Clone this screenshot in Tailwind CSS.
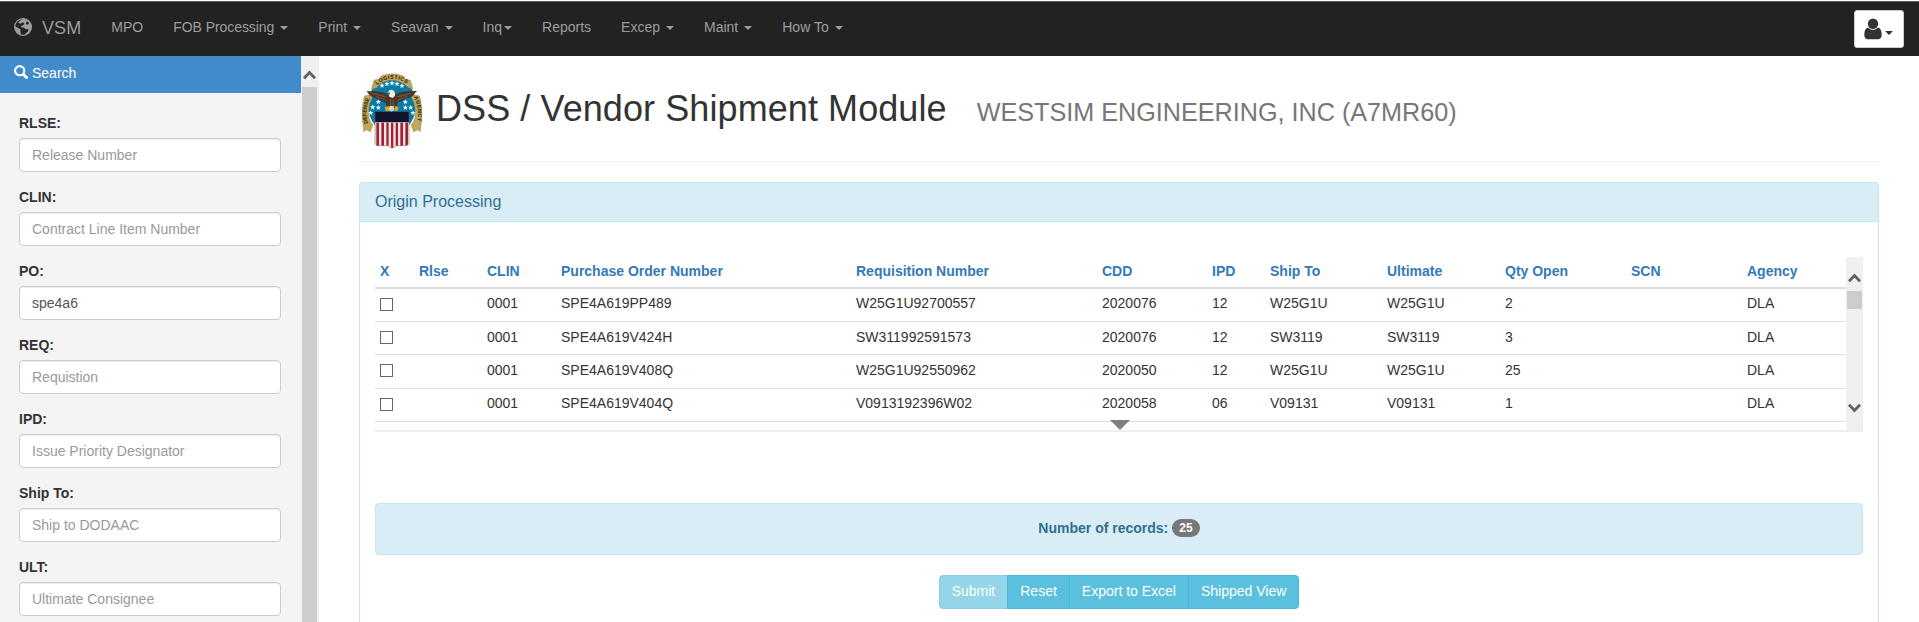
<!DOCTYPE html>
<html lang="en">
<head>
<meta charset="utf-8">
<title>DSS / Vendor Shipment Module</title>
<script src="https://cdn.jsdelivr.net/npm/@tailwindcss/browser@4"></script>
</head>
<body class="h-[622px] overflow-hidden bg-white font-['Liberation_Sans',Arial,sans-serif] text-sm leading-5 text-[#333]">
<div class="flex h-[622px] flex-col pt-px">
  <!-- Navigation bar -->
  <nav class="flex h-[55px] shrink-0 items-start border-t border-[#5c5c5c] bg-[#222] pr-[15px] text-[#9d9d9d]">
    <a class="flex h-[50px] items-center pt-px pr-[15px] pl-3.5 text-lg leading-5">
      <svg class="-mt-0.5 h-[18px] w-[18px]" viewBox="0 0 18 18"><circle cx="9" cy="9" r="8.4" fill="#222" stroke="#9d9d9d" stroke-width="1.1"/><path fill="#9d9d9d" d="M9 .5 6.6 2.3 4.2 4.1 5 5.4 7 5.6 9 4.3l1.2 1.4L9.3 7.2 6.9 8.1l.8 1.3 2.2.1 1.6 1.6 3 .4-.6 2.2-2.2 1.5-.7 2c4-.9 6.7-4.2 6.7-8.200C17.700 4.400 13.900.7 9 .5ZM.7 7.500 2.500 9.300l2.400.9 1.800 1.600-.4 2 .8 3C3.200 16.400.3 12.300.7 7.500Z"/><path fill="#222" d="m13 3.500 1.900.9-.2 1.700-2.100.6-.8-1.700Z"/></svg>
      <span class="ml-2.5 tracking-[0.1px]">VSM</span>
    </a>
    <div class="flex [&>a]:flex [&>a]:h-[50px] [&>a]:items-center [&>a]:px-[15px] [&>a]:pb-2.5 [&>a]:pt-0">
      <a class="mt-[5px]">MPO</a>
      <a class="mt-[5px] tracking-[-0.06px]">FOB Processing<svg class="ml-1.5 mt-0.5 h-1 w-2" viewBox="0 0 8 4"><path fill="#9d9d9d" d="M0 0h8L4 4Z"/></svg></a>
      <a class="mt-[5px]">Print<svg class="ml-1.5 mt-0.5 h-1 w-2" viewBox="0 0 8 4"><path fill="#9d9d9d" d="M0 0h8L4 4Z"/></svg></a>
      <a class="mt-[5px]">Seavan<svg class="ml-1.5 mt-0.5 h-1 w-2" viewBox="0 0 8 4"><path fill="#9d9d9d" d="M0 0h8L4 4Z"/></svg></a>
      <a class="mt-[5px]">Inq<svg class="ml-0.5 mt-0.5 h-1 w-2" viewBox="0 0 8 4"><path fill="#9d9d9d" d="M0 0h8L4 4Z"/></svg></a>
      <a class="mt-[5px]">Reports</a>
      <a class="mt-[5px]">Excep<svg class="ml-1.5 mt-0.5 h-1 w-2" viewBox="0 0 8 4"><path fill="#9d9d9d" d="M0 0h8L4 4Z"/></svg></a>
      <a class="mt-[5px]">Maint<svg class="ml-1.5 mt-0.5 h-1 w-2" viewBox="0 0 8 4"><path fill="#9d9d9d" d="M0 0h8L4 4Z"/></svg></a>
      <a class="mt-[5px]">How To<svg class="ml-1.5 mt-0.5 h-1 w-2" viewBox="0 0 8 4"><path fill="#9d9d9d" d="M0 0h8L4 4Z"/></svg></a>
    </div>
    <button class="mt-2 ml-auto flex h-[38px] w-[50px] rounded-[3px] border border-[#ccc] bg-white pt-[7px] pl-[9px]">
      <svg class="h-[22px] w-[18px]" viewBox="0 0 18 22"><circle cx="9" cy="5.700" r="5.200" fill="#333"/><path fill="#333" d="M4.200 9.500C1.500 10 .3 12.500.3 17c0 2.500 1.300 4.200 3.500 4.200h10.400c2.200 0 3.500-1.700 3.500-4.200 0-4.500-1.200-7-3.900-7.500C12.500 11 11 11.800 9 11.800S5.500 11 4.200 9.500Z"/></svg>
      <svg class="mt-[13px] ml-[3px] h-1 w-2" viewBox="0 0 8 4"><path fill="#333" d="M0 0h8L4 4Z"/></svg>
    </button>
  </nav>

  <div class="flex min-h-0 flex-1">
    <!-- Search panel -->
    <aside class="w-[301px] shrink-0 bg-[#f4f4f4]">
      <div class="flex h-[37px] items-start bg-[#428bca] pt-[7px] pl-3.5 text-white">
        <svg class="mt-0.5 h-3.5 w-3.5" viewBox="0 0 14 14"><circle cx="5.700" cy="5.700" r="4.600" fill="none" stroke="#fff" stroke-width="2.100"/><path stroke="#fff" stroke-width="2.900" stroke-linecap="round" d="m9.700 9.700 2.800 2.800"/></svg>
        <span class="ml-1">Search</span>
      </div>
      <form class="flex flex-col gap-[15px] pt-5 pr-5 pl-[19px] [&_input]:mt-[5px] [&_input]:h-[34px] [&_input]:w-full [&_input]:rounded [&_input]:border [&_input]:border-[#ccc] [&_input]:bg-white [&_input]:px-3 [&_input]:text-[#555] [&_input]:shadow-[inset_0_1px_1px_rgba(0,0,0,0.075)] [&_input]:placeholder:text-[#999] [&_label]:block [&_label]:h-[59px] [&_label]:font-bold [&_input]:font-normal">
        <label>RLSE:<input placeholder="Release Number"></label>
        <label>CLIN:<input placeholder="Contract Line Item Number"></label>
        <label>PO:<input value="spe4a6"></label>
        <label>REQ:<input placeholder="Requistion"></label>
        <label>IPD:<input placeholder="Issue Priority Designator"></label>
        <label>Ship To:<input placeholder="Ship to DODAAC"></label>
        <label>ULT:<input placeholder="Ultimate Consignee"></label>
      </form>
    </aside>
    <div class="flex w-[18px] shrink-0 flex-col bg-[#f0f0f0] pl-px">
      <svg class="mt-3.5 ml-px h-[10px] w-[13px]" viewBox="0 0 13 10"><path fill="none" stroke="#606060" stroke-width="2.800" d="m1 8.300 5.500-5.800L12 8.300"/></svg>
      <div class="mt-[7px] w-[15px] flex-1 bg-[#cdcdcd]"></div>
    </div>

    <!-- Main content -->
    <main class="ml-10 flex w-[1520px] flex-col">
      <header class="flex h-[106px] shrink-0 border-b border-[#eee] pl-[3px]">
        <svg class="mt-[17px] h-[76px] w-[60px] shrink-0" viewBox="36 39 180 228">
          <defs>
            <path id="arcTop" d="M80 75Q126 38 176 75"/>
            <path id="arcLeft" d="M54 190Q41 150 63 108"/>
            <path id="arcRight" d="M192 110Q210 150 201 196"/>
          </defs>
          <ellipse cx="126" cy="136" rx="72" ry="84" fill="#087aa8"/>
          <g fill="#bfa75c" stroke="#85723a" stroke-width="1">
            <path d="m64 88 8-28 18-3 3-9q34-14 68 0l4 9 16 4 8 27-16-6-10-10q-37-23-74 0l-9 12Z"/>
            <path d="m43 108 16-4 9 6-8 20q-9 34 2 56l7 8-8 22-12-7-8 6-2-20q-8-40 4-87Z"/>
            <path d="m209 108-16-4-9 6 8 20q9 34-2 56l-7 8 8 22 12-7 8 6 2-20q8-40-4-87Z"/>
          </g>
          <g fill="#1d1808" font-family="Liberation Sans, sans-serif" font-weight="bold" font-size="16">
            <text><textPath href="#arcTop" textLength="98">LOGISTICS</textPath></text>
            <text><textPath href="#arcLeft" textLength="76">DEFENSE</textPath></text>
            <text><textPath href="#arcRight" textLength="76">AGENCY</textPath></text>
          </g>
          <g fill="#fff">
            <path id="star" d="m96 68 2 6 6 0-5 4 2 6-5-4-5 4 2-6-5-4 6 0Z"/>
            <use href="#star" x="15" y="-5"/><use href="#star" x="30" y="-7"/><use href="#star" x="45" y="-5"/><use href="#star" x="60" y="1"/>
            <use href="#star" x="-11" y="49"/><use href="#star" x="-28" y="65"/><use href="#star" x="-11" y="66"/><use href="#star" x="-34" y="82"/>
            <use href="#star" x="70" y="49"/><use href="#star" x="70" y="66"/><use href="#star" x="86" y="66"/><use href="#star" x="93" y="82"/>
          </g>
          <path fill="#4f3728" stroke="#2c1d14" stroke-width="1" d="M51 94q22 0 44 3 14 2 22 10h16q8-8 22-10 20-3 45-4l-8 9q-8 10-24 13l-12 7-13 4-6 18h-24l-6-18-13-4-12-7q-24-5-31-21Z"/>
          <path stroke="#8c6b52" stroke-width="2" fill="none" d="m66 100 40 10m-28-1 30 12m76-21-40 10m28-1-30 12M122 118v22m7-22v22"/>
          <path fill="#f5efdc" d="M115 93q11-8 19 2l1 13-8 6-11-5 4-9Z"/>
          <path fill="#d7a91c" d="m116 93-5 5 8 1ZM104 141l12-3 1 14-10 2Zm30-3 12 3-3 13-9-2Z"/>
          <path fill="#ded5c0" d="m117 140 6-3 8 2 3 11-10 5-8-5Z"/>
          <path fill="#f2eada" d="M75 158h102v94l-10 5h-27l-14 8-13-8H85l-10-5Z"/>
          <path fill="#a71d3d" d="M79 188h8v69h-8Zm15 0h8v69h-8Zm15 0h7v69h-7Zm14 0h7v75h-7Zm14 0h7v69h-7Zm14 0h8v69h-8Zm15 0h8v67l-8 2Z"/>
          <path fill="#10142d" d="M75 155h102v32H75Z"/>
          <path fill="none" stroke="#7e5540" stroke-width="1.500" d="M75 158v94l10 5h28l13 8 14-8h27l10-5v-94"/>
        </svg>
        <h1 class="mt-[33px] ml-3.5 text-4xl leading-[40px] tracking-[0.085px] whitespace-nowrap">DSS / Vendor Shipment Module<span class="ml-[30px] text-[25.2px] tracking-normal text-[#777]">WESTSIM ENGINEERING, INC (A7MR60)</span></h1>
      </header>

      <section class="mt-5 flex-1 rounded-t border border-b-0 border-[#bce8f1]">
        <h2 class="h-[39px] rounded-t-[3px] border-b border-[#bce8f1] bg-[#d9edf7] pt-[9px] pl-[15px] text-base leading-[20px] text-[#31708f]">Origin Processing</h2>
        <div class="px-[15px] pt-[35px]">
          <!-- Scrolling results grid -->
          <div class="relative flex h-[175px] border-b-2 border-[#eee]">
            <div class="w-[1471px] [&>div]:grid [&>div]:grid-cols-[39px_68px_74px_295px_246px_110px_58px_117px_118px_126px_116px_104px] [&>div]:border-b [&>div]:border-[#ddd] [&>div]:pl-[5px]">
              <div class="h-8 border-b-2! pt-1 font-bold text-[#337ab7]"><span>X</span><span>Rlse</span><span>CLIN</span><span>Purchase Order Number</span><span>Requisition Number</span><span>CDD</span><span>IPD</span><span>Ship To</span><span>Ultimate</span><span>Qty Open</span><span>SCN</span><span>Agency</span></div>
              <div class="h-[33px] pt-1"><i class="mt-[5px] size-[13px] border border-[#666]"></i><span></span><span>0001</span><span>SPE4A619PP489</span><span>W25G1U92700557</span><span>2020076</span><span>12</span><span>W25G1U</span><span>W25G1U</span><span>2</span><span></span><span>DLA</span></div>
              <div class="h-[33px] pt-[5px]"><i class="mt-1 size-[13px] border border-[#666]"></i><span></span><span>0001</span><span>SPE4A619V424H</span><span>SW311992591573</span><span>2020076</span><span>12</span><span>SW3119</span><span>SW3119</span><span>3</span><span></span><span>DLA</span></div>
              <div class="h-[34px] pt-[5px]"><i class="mt-1 size-[13px] border border-[#666]"></i><span></span><span>0001</span><span>SPE4A619V408Q</span><span>W25G1U92550962</span><span>2020050</span><span>12</span><span>W25G1U</span><span>W25G1U</span><span>25</span><span></span><span>DLA</span></div>
              <div class="h-[33px] pt-1"><i class="mt-[5px] size-[13px] border border-[#666]"></i><span></span><span>0001</span><span>SPE4A619V404Q</span><span>V0913192396W02</span><span>2020058</span><span>06</span><span>V09131</span><span>V09131</span><span>1</span><span></span><span>DLA</span></div>
            </div>
            <div class="flex flex-1 flex-col items-center bg-[#f0f0f0]">
              <svg class="mt-4 h-[10px] w-[13px]" viewBox="0 0 13 10"><path fill="none" stroke="#606060" stroke-width="2.800" d="m1 8.300 5.500-5.800L12 8.300"/></svg>
              <div class="mt-2 h-[18px] w-[15px] bg-[#cdcdcd]"></div>
              <svg class="mt-[94px] h-[10px] w-[13px]" viewBox="0 0 13 10"><path fill="none" stroke="#606060" stroke-width="2.800" d="M1 1.700l5.500 5.800L12 1.700"/></svg>
            </div>
            <svg class="absolute top-[163px] left-[735px] h-2.5 w-5" viewBox="0 0 20 10"><path fill="#808080" d="M0 0h20L10 10Z"/></svg>
          </div>

          <div class="mt-[71px] flex h-[52px] items-start justify-center rounded border border-[#bce8f1] bg-[#d9edf7] pt-3.5 font-bold text-[#31708f]">
            <span>Number of records:</span><span class="ml-1 mt-px h-[18px] rounded-[10px] bg-[#777] px-[7px] text-xs leading-[18px] text-white">25</span>
          </div>

          <div class="mt-5 flex justify-center [&>button]:h-[34px] [&>button]:border [&>button]:border-[#46b8da] [&>button]:bg-[#5bc0de] [&>button]:px-3 [&>button]:pb-0.5 [&>button]:text-white">
            <button class="rounded-l opacity-65">Submit</button>
            <button class="-ml-px">Reset</button>
            <button class="-ml-px">Export to Excel</button>
            <button class="-ml-px rounded-r">Shipped View</button>
          </div>
        </div>
      </section>
    </main>
  </div>
</div>
</body>
</html>
